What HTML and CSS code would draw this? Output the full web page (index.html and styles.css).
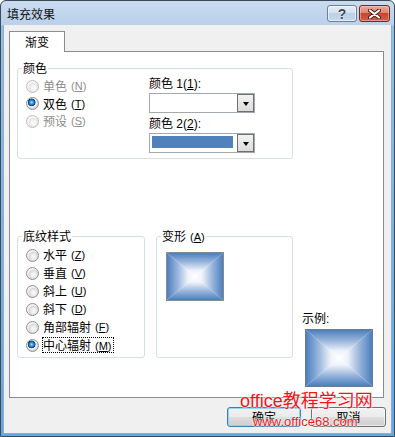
FILE: index.html
```html
<!DOCTYPE html>
<html lang="zh-CN">
<head>
<meta charset="utf-8">
<title>填充效果</title>
<link rel="stylesheet" href="styles.css">
</head>
<body>
<div class="window">
  <div class="titlebar">
    <span class="title">填充效果</span>
    <div class="caption-buttons">
      <div class="cap help">?</div>
      <div class="cap close">
        <svg width="13" height="10" viewBox="0 0 13 10">
          <path d="M2 1.5 L11 8.5 M11 1.5 L2 8.5" stroke="#4b1d14" stroke-width="4" stroke-linecap="round" fill="none"/>
          <path d="M2 1.5 L11 8.5 M11 1.5 L2 8.5" stroke="#ffffff" stroke-width="2.2" stroke-linecap="round" fill="none"/>
        </svg>
      </div>
    </div>
  </div>

  <div class="client">
    <div class="tabs"><div class="tab">渐变</div></div>

    <div class="panel">
      <div class="group colors">
        <div class="legend">颜色</div>
        <div class="colors-body">
          <div class="radio-col">
            <div class="radio disabled"><span class="dot"></span>单色<span class="acc">(<u>N</u>)</span></div>
            <div class="radio"><span class="dot checked"></span>双色<span class="acc">(<u>T</u>)</span></div>
            <div class="radio disabled"><span class="dot"></span>预设<span class="acc">(<u>S</u>)</span></div>
          </div>
          <div class="color-col">
            <div class="field-label">颜色<span class="lat"> 1(<u>1</u>):</span></div>
            <div class="combo">
              <div class="combo-value"></div>
              <div class="combo-btn"><span class="arrow"></span></div>
            </div>
            <div class="field-label gap">颜色<span class="lat"> 2(<u>2</u>):</span></div>
            <div class="combo">
              <div class="combo-value"><span class="swatch"></span></div>
              <div class="combo-btn"><span class="arrow"></span></div>
            </div>
          </div>
        </div>
      </div>

      <div class="bottom-row">
        <div class="group shading">
          <div class="legend">底纹样式</div>
          <div class="radio-list">
            <div class="radio row18"><span class="dot"></span>水平<span class="acc">(<u>Z</u>)</span></div>
            <div class="radio row18"><span class="dot"></span>垂直<span class="acc">(<u>V</u>)</span></div>
            <div class="radio row18"><span class="dot"></span>斜上<span class="acc">(<u>U</u>)</span></div>
            <div class="radio row18"><span class="dot"></span>斜下<span class="acc">(<u>D</u>)</span></div>
            <div class="radio row18"><span class="dot"></span>角部辐射<span class="acc">(<u>F</u>)</span></div>
            <div class="radio row18"><span class="dot checked"></span><span class="focus">中心辐射<span class="acc">(<u>M</u>)</span></span></div>
          </div>
        </div>

        <div class="group variants">
          <div class="legend">变形<span class="acc">(<u>A</u>)</span></div>
          <div class="variant-box">
            <svg class="grad" viewBox="0 0 100 100" preserveAspectRatio="none">
              <defs>
                <linearGradient id="a1" gradientUnits="userSpaceOnUse" x1="0" y1="0" x2="0" y2="50">
                  <stop offset="0" stop-color="#4b7fbe"/><stop offset="0.4" stop-color="#9db8dd"/><stop offset="0.75" stop-color="#eef3fa"/><stop offset="1" stop-color="#ffffff"/>
                </linearGradient>
                <linearGradient id="a2" gradientUnits="userSpaceOnUse" x1="0" y1="100" x2="0" y2="50">
                  <stop offset="0" stop-color="#4b7fbe"/><stop offset="0.4" stop-color="#9db8dd"/><stop offset="0.75" stop-color="#eef3fa"/><stop offset="1" stop-color="#ffffff"/>
                </linearGradient>
                <linearGradient id="a3" gradientUnits="userSpaceOnUse" x1="0" y1="0" x2="50" y2="0">
                  <stop offset="0" stop-color="#4b7fbe"/><stop offset="0.4" stop-color="#9db8dd"/><stop offset="0.75" stop-color="#eef3fa"/><stop offset="1" stop-color="#ffffff"/>
                </linearGradient>
                <linearGradient id="a4" gradientUnits="userSpaceOnUse" x1="100" y1="0" x2="50" y2="0">
                  <stop offset="0" stop-color="#4b7fbe"/><stop offset="0.4" stop-color="#9db8dd"/><stop offset="0.75" stop-color="#eef3fa"/><stop offset="1" stop-color="#ffffff"/>
                </linearGradient>
              </defs>
              <polygon points="0,0 100,0 50,50" fill="url(#a1)"/>
              <polygon points="0,100 100,100 50,50" fill="url(#a2)"/>
              <polygon points="0,0 0,100 50,50" fill="url(#a3)"/>
              <polygon points="100,0 100,100 50,50" fill="url(#a4)"/>
            </svg>
          </div>
        </div>

        <div class="sample">
          <div class="sample-label">示例<span class="lat">:</span></div>
          <div class="sample-box">
            <svg class="grad" viewBox="0 0 100 100" preserveAspectRatio="none">
              <defs>
                <linearGradient id="b1" gradientUnits="userSpaceOnUse" x1="0" y1="0" x2="0" y2="50">
                  <stop offset="0" stop-color="#4b7fbe"/><stop offset="0.4" stop-color="#9db8dd"/><stop offset="0.75" stop-color="#eef3fa"/><stop offset="1" stop-color="#ffffff"/>
                </linearGradient>
                <linearGradient id="b2" gradientUnits="userSpaceOnUse" x1="0" y1="100" x2="0" y2="50">
                  <stop offset="0" stop-color="#4b7fbe"/><stop offset="0.4" stop-color="#9db8dd"/><stop offset="0.75" stop-color="#eef3fa"/><stop offset="1" stop-color="#ffffff"/>
                </linearGradient>
                <linearGradient id="b3" gradientUnits="userSpaceOnUse" x1="0" y1="0" x2="50" y2="0">
                  <stop offset="0" stop-color="#4b7fbe"/><stop offset="0.4" stop-color="#9db8dd"/><stop offset="0.75" stop-color="#eef3fa"/><stop offset="1" stop-color="#ffffff"/>
                </linearGradient>
                <linearGradient id="b4" gradientUnits="userSpaceOnUse" x1="100" y1="0" x2="50" y2="0">
                  <stop offset="0" stop-color="#4b7fbe"/><stop offset="0.4" stop-color="#9db8dd"/><stop offset="0.75" stop-color="#eef3fa"/><stop offset="1" stop-color="#ffffff"/>
                </linearGradient>
              </defs>
              <polygon points="0,0 100,0 50,50" fill="url(#b1)"/>
              <polygon points="0,100 100,100 50,50" fill="url(#b2)"/>
              <polygon points="0,0 0,100 50,50" fill="url(#b3)"/>
              <polygon points="100,0 100,100 50,50" fill="url(#b4)"/>
            </svg>
          </div>
        </div>
      </div>
    </div>

    <div class="buttons">
      <div class="btn default">确定</div>
      <div class="btn">取消</div>
    </div>
  </div>

  <div class="watermark">
    <div class="wm-line1">office教程学习网</div>
    <div class="wm-line2">www.office68.com</div>
  </div>
</div>
</body>
</html>
```

FILE: styles.css
```css
html, body {
  margin: 0;
  padding: 0;
  background: #ffffff;
}

body {
  font-family: "Noto Sans CJK SC", sans-serif;
  font-size: 12px;
  color: #000;
}

.window {
  position: relative;
  width: 395px;
  height: 437px;
  box-sizing: border-box;
  border: 1px solid #3e4a58;
  border-radius: 6px 6px 0 0;
  padding: 0 2px 2px 2px;
  display: flex;
  flex-direction: column;
  background: linear-gradient(#c9dbef 0, #bad1ea 24px, #8fc0ea 25px, #5fa9e2 100%);
  overflow: hidden;
}

/* ---------- title bar ---------- */
.titlebar {
  height: 24px;
  flex: none;
  display: flex;
  align-items: flex-start;
  padding-left: 4px;
  box-sizing: border-box;
}

.title {
  flex: 1;
  margin-top: 6px;
  line-height: 14px;
  font-size: 12px;
  color: #111;
}

.caption-buttons {
  display: flex;
  gap: 2px;
  margin-top: 4px;
  margin-right: 2px;
}

.cap {
  height: 17px;
  box-sizing: border-box;
  border-radius: 3px;
  display: flex;
  align-items: center;
  justify-content: center;
}

.help {
  width: 30px;
  border: 1px solid #6f7f93;
  background: linear-gradient(#e6eef7 0%, #d3e0ef 45%, #bcd0e7 50%, #c6d8ee 100%);
  box-shadow: inset 0 0 0 1px rgba(255, 255, 255, 0.55);
  font-family: "Liberation Sans", sans-serif;
  font-weight: bold;
  font-size: 14px;
  line-height: 14px;
  color: #3a4656;
  text-shadow: 0 0 1px #fff, 0 0 1px #fff;
}

.close {
  width: 31px;
  border: 1px solid #6e2b1f;
  background: linear-gradient(#e9a99a 0%, #dd8570 45%, #c8452f 50%, #d0604a 100%);
  box-shadow: inset 0 0 0 1px rgba(255, 220, 210, 0.45);
}

/* ---------- client area ---------- */
.client {
  flex: 1;
  background: #f0f0f0;
  border: 1px solid #95abc4;
  border-top: none;
  padding: 6px 5px 0 5px;
  display: flex;
  flex-direction: column;
}

.tabs {
  display: flex;
  position: relative;
  z-index: 1;
}

.tab {
  width: 56px;
  height: 21px;
  box-sizing: border-box;
  border: 1px solid #898c95;
  border-bottom: none;
  background: #ffffff;
  margin-bottom: -1px;
  text-align: center;
  padding-top: 3px;
  line-height: 14px;
}

.panel {
  width: 375px;
  height: 347px;
  box-sizing: border-box;
  border: 1px solid #898c95;
  background: #ffffff;
  padding: 16px 0 0 7px;
}

/* ---------- group boxes ---------- */
.group {
  border: 1px solid #d5dfe5;
  border-radius: 3px;
  box-sizing: border-box;
}

.legend {
  display: block;
  width: fit-content;
  margin: -8px 0 0 4px;
  padding: 0 1px;
  background: #ffffff;
  line-height: 14px;
  white-space: nowrap;
}

.colors {
  width: 276px;
}

.colors-body {
  display: flex;
  padding: 1px 0 5px 8px;
}

.radio-col {
  width: 123px;
  padding-top: 1.5px;
}

.radio {
  display: flex;
  align-items: center;
  height: 17.5px;
  white-space: nowrap;
  line-height: 14px;
}

.radio.row18 {
  height: 18px;
}

.radio.disabled {
  color: #8d8d8d;
}

.dot {
  flex: none;
  width: 13px;
  height: 13px;
  box-sizing: border-box;
  border-radius: 50%;
  margin-right: 4px;
  border: 1px solid #8e8f8f;
  background: radial-gradient(circle at 60% 62%, #fbfbfb 0, #eeeeee 2.5px, #d6d6d6 4.5px, #f2f2f2 5.5px);
}

.radio.disabled .dot {
  border-color: #bcbcbc;
  background: radial-gradient(circle at 60% 62%, #fdfdfd 0, #f3f3f3 2.5px, #e4e4e4 4.5px, #f7f7f7 5.5px);
}

.dot.checked {
  background: radial-gradient(circle at 42% 40%, #b6ecff 0, #3a9be0 1.6px, #155fb0 3px, #0b3a7a 3.6px, #f4f4f4 4.2px, #f4f4f4 4.8px, #d8d8d8 5.5px);
}

.acc {
  font-family: "Liberation Sans", "Noto Sans CJK SC", sans-serif;
  font-size: 11px;
  margin-left: 4px;
}

.lat {
  font-family: "Liberation Sans", "Noto Sans CJK SC", sans-serif;
  font-size: 12px;
}

.focus {
  display: inline-block;
  line-height: 14px;
  height: 14px;
  outline: 1px dotted #000;
  padding-right: 1px;
}

.color-col {
  width: 106px;
}

.field-label {
  line-height: 14px;
  height: 14px;
  white-space: nowrap;
}

.field-label.gap {
  margin-top: 3px;
}

.combo {
  margin-top: 3px;
  height: 20px;
  box-sizing: border-box;
  border: 1px solid #a3a9b0;
  background: #ffffff;
  display: flex;
}

.combo-value {
  flex: 1;
  padding: 2px 0 0 2px;
}

.swatch {
  display: block;
  width: 81px;
  height: 12px;
  background: #4f81bd;
}

.combo-btn {
  width: 17px;
  box-sizing: border-box;
  border: 1px solid #707070;
  background: linear-gradient(#f2f2f2, #dcdcdc);
  display: flex;
  align-items: center;
  justify-content: center;
  padding-top: 2px;
}

.arrow {
  width: 0;
  height: 0;
  border-left: 3.5px solid transparent;
  border-right: 3.5px solid transparent;
  border-top: 4px solid #000;
}

/* ---------- bottom row ---------- */
.bottom-row {
  display: flex;
  align-items: flex-start;
  margin-top: 77px;
}

.shading {
  width: 128px;
  height: 122px;
}

.radio-list {
  padding: 3px 0 0 8px;
}

.variants {
  width: 137px;
  height: 122px;
  margin-left: 11px;
}

.variant-box {
  width: 58px;
  height: 49px;
  box-sizing: border-box;
  border: 1px solid #858a91;
  margin: 8px 0 0 9px;
}

.grad {
  display: block;
  width: 100%;
  height: 100%;
}

.sample {
  margin: 75px 0 0 9px;
}

.sample-label {
  line-height: 14px;
  height: 14px;
  white-space: nowrap;
}

.sample-box {
  width: 68px;
  height: 58px;
  box-sizing: border-box;
  border: 1px solid #6f7a88;
  margin: 4px 0 0 3px;
}

/* ---------- buttons ---------- */
.buttons {
  display: flex;
  justify-content: flex-end;
  gap: 10px;
  margin-top: 9px;
  padding-right: 0;
}

.btn {
  width: 75px;
  height: 20px;
  box-sizing: border-box;
  border: 1px solid #707070;
  border-radius: 3px;
  background: linear-gradient(#f2f2f2 0%, #ebebeb 48%, #dddddd 52%, #cfcfcf 100%);
  box-shadow: inset 0 0 0 1px rgba(255, 255, 255, 0.6);
  text-align: center;
  line-height: 17px;
}

.btn.default {
  width: 74px;
  border-color: #3c7fb1;
  box-shadow: inset 0 0 0 1px #8fd6f7;
}

/* ---------- watermark overlay ---------- */
.watermark {
  position: absolute;
  left: 239px;
  top: 391px;
  color: #f2131b;
  font-family: "Liberation Sans", "Noto Sans CJK SC", sans-serif;
  pointer-events: none;
  text-shadow: 0 0 1px #fff, 0 0 2px #fff, 0 0 2px #fff;
}

.wm-line1 {
  font-size: 18px;
  line-height: 18px;
  white-space: nowrap;
}

.wm-line2 {
  font-size: 13px;
  line-height: 14px;
  margin: 5px 0 0 13px;
  white-space: nowrap;
}
```
